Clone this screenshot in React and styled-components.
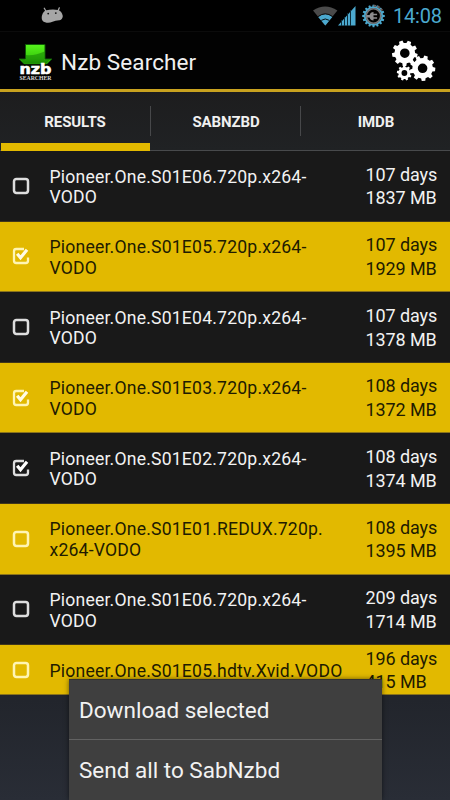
import React from "react";
import styled, { createGlobalStyle } from "styled-components";

const YELLOW = "#e2b900";

const GlobalStyle = createGlobalStyle`
  body { margin: 0; background: #000; }
  * { box-sizing: border-box; }
`;

const Screen = styled.div`
  position: relative;
  width: 450px;
  height: 800px;
  overflow: hidden;
  display: flex;
  flex-direction: column;
  font-family: Roboto, "Noto Sans", sans-serif;
  background: linear-gradient(#181a1e 0px, #22252c 700px, #292d36 800px);
`;

const StatusBar = styled.div`
  height: 32px;
  flex: none;
  display: flex;
  align-items: center;
  background: #000;
  border-bottom: 1px solid #0b0b0b;
  padding: 0 8px 0 41px;
`;

const StatusIcons = styled.div`
  margin-left: auto;
  display: flex;
  align-items: center;
`;

const BatterySlot = styled.div`
  display: flex;
  margin-left: 6px;
`;

const Clock = styled.span`
  width: 49px;
  margin-left: 8px;
  padding-top: 1px;
  color: #4ba9cf;
  font-size: 20px;
  line-height: 30px;
  letter-spacing: -0.2px;
  white-space: nowrap;
`;

const ActionBar = styled.header`
  height: 57px;
  flex: none;
  display: flex;
  align-items: center;
  background: #020202;
  padding: 0 14px 0 18px;
`;

const AppTitle = styled.h1`
  margin: 2px 0 0 7px;
  flex: 1;
  font-size: 22.5px;
  line-height: 28px;
  font-weight: 400;
  color: #f0f0f0;
  letter-spacing: 0.1px;
`;

const Tabs = styled.nav`
  height: 62px;
  flex: none;
  display: flex;
  border-top: 3px solid #c9a21f;
  border-bottom: 1px solid #484a4c;
  background: linear-gradient(#1d1d1e, #202224);
`;

const Tab = styled.div`
  flex: 1;
  height: ${(p) => (p.$active ? "59px" : "58px")};
  display: flex;
  align-items: center;
  justify-content: center;
  font-size: 15px;
  font-weight: 700;
  color: #f0f0f0;
  letter-spacing: -0.1px;
  border-bottom: ${(p) => (p.$active ? `8px solid ${YELLOW}` : "0 solid transparent")};
  padding: ${(p) => (p.$active ? "8px 1px 0 0" : "1px 0 0 1px")};
  margin-left: ${(p) => (p.$active ? "1px" : "0")};
`;

const TabDivider = styled.div`
  width: 1px;
  height: 30px;
  margin-top: 14px;
  background: #47484a;
`;

const List = styled.ul`
  margin: 0;
  padding: 0;
  list-style: none;
  flex: none;
`;

const Row = styled.li`
  height: ${(p) => (p.$short ? "50px" : "70.6px")};
  display: flex;
  align-items: center;
  padding: 0 0 0 12px;
  background: ${(p) => (p.$yellow ? YELLOW : "#191919")};
  color: ${(p) => (p.$yellow ? "#211b00" : "#f2f2f2")};
  border-bottom: 1px solid ${(p) => (p.$yellow ? "#8b741b" : "#40361a")};
`;

const Name = styled.div`
  width: 316px;
  flex: none;
  margin-left: 19.5px;
  padding-top: 2.6px;
  font-size: 17.6px;
  line-height: 20.6px;
  letter-spacing: 0.2px;
  white-space: pre-line;
`;

const Meta = styled.div`
  padding-top: 1.4px;
  font-size: 18px;
  line-height: 23.8px;
  white-space: nowrap;
  letter-spacing: -0.1px;
`;

const Menu = styled.div`
  position: absolute;
  left: 69px;
  top: 679px;
  width: 312.5px;
  height: 121px;
  background: #3f3f3f;
  border-top: 1px solid #303030;
  box-shadow: 0 0 5px rgba(0, 0, 0, 0.55);
`;

const MenuItem = styled.div`
  height: 59px;
  display: flex;
  align-items: center;
  padding: 0 10px;
  font-size: 22.5px;
  color: #f2f2f2;
  letter-spacing: 0;
  & + & { height: 61px; border-top: 1px solid #626262; }
`;

function gearPath(cx, cy, outer, root, teeth, turn = 0) {
  const points = [];
  const step = (Math.PI * 2) / teeth;
  for (let i = 0; i < teeth; i++) {
    const a = i * step + turn;
    [[-0.31, root], [-0.2, outer], [0.2, outer], [0.31, root]].forEach(([t, r]) => {
      points.push(`${(cx + Math.cos(a + t * step) * r).toFixed(2)} ${(cy + Math.sin(a + t * step) * r).toFixed(2)}`);
    });
  }
  return `M${points.join("L")}Z`;
}

const hole = (x, y, r) => `M${x - r} ${y}a${r} ${r} 0 1 0 ${r * 2} 0a${r} ${r} 0 1 0 ${-r * 2} 0Z`;

const AndroidIcon = () => (
  <svg width="23" height="18" viewBox="0 0 23 18">
    <path d="M3.3 1.2 5 4.2M18.3.8 17 4" stroke="#a6a6a6" strokeWidth="1.3" strokeLinecap="round" />
    <path d="M4.5 3.5Q11 1.8 17 3q3.8 1.2 4.8 6-.2 3.5-3.2 4.3-4.1-.1-7.1 1.5-3.9 1.8-7.4.5Q.8 14.3.7 11q.1-5.1 3.8-7.5Z" fill="#a6a6a6" />
    <circle cx="7.2" cy="6.6" r=".9" fill="#111" />
    <circle cx="14.8" cy="6.1" r=".9" fill="#111" />
  </svg>
);

const WifiIcon = () => (
  <svg width="25" height="20" viewBox="0 0 25 20">
    <path d="M0 4.6Q12-3.8 24.4 4.6L12.3 19.5Z" fill="#4a4a4a" />
    <path d="M5.2 10.9Q12.3 5.8 19.3 10.9L12.3 19.5Z" fill="#4ba9cf" />
    <path d="M5 10.6Q12.3 5 19.7 10.6M8.2 14.4Q12.3 11.5 16.4 14.4" stroke="#080c0e" strokeWidth="1" fill="none" />
  </svg>
);

const SignalIcon = () => (
  <svg width="18" height="20" viewBox="0 0 18 20">
    <path d="M0 19.5 17.5 0V19.5Z" fill="#4ba9cf" />
    <path d="M3.5 14v6M6.5 11v9M9.5 7v13M12.5 4v16" stroke="#0c2c3a" strokeWidth="1" />
  </svg>
);

const BatteryIcon = () => (
  <svg width="23" height="24" viewBox="0 0 23 24">
    <path d={gearPath(11.5, 12, 11.3, 9.5, 16) + hole(11.5, 12, 7.8)} fill="#4ba9cf" fillRule="evenodd" />
    <path d="M11.5 1.8A10.2 10.2 0 0 1 20.5 7" stroke="#665e5e" strokeWidth="2" strokeDasharray="2.5 1.4" fill="none" />
    <circle cx="11.5" cy="12" r="7.2" fill="none" stroke="#77777a" strokeWidth="1.6" />
    <path d="M4.5 11H7.6Q8.4 8 11.5 8v1.7h3.6v1.5h-3.6v2h3.6v1.5h-3.6V16.4Q8.4 16.2 7.6 13.4H4.5Z" fill="#8b8b8e" />
  </svg>
);

const LogoSvg = styled.svg`
  width: 36px;
  height: 40px;
  margin-top: 2px;
`;
const LogoText = styled.text`
  font-family: "DejaVu Sans", sans-serif;
  font-weight: 700;
  font-size: 14px;
  fill: #fff;
  stroke: #fff;
  stroke-width: 0.6px;
`;
const LogoCaption = styled.text`
  font-family: "Liberation Serif", serif;
  font-size: 5.9px;
  font-weight: 700;
  fill: #d9d9d9;
`;

const Logo = () => (
  <LogoSvg viewBox="0 0 36 40">
    <defs>
      <linearGradient id="arrow" x1="0" y1="0" x2="0" y2="1">
        <stop offset="0" stopColor="#58f51d" />
        <stop offset=".45" stopColor="#37c90b" />
        <stop offset=".75" stopColor="#158004" />
        <stop offset="1" stopColor="#0a5200" />
      </linearGradient>
    </defs>
    <path d="M7.5 2.5H27V17H34L17.5 34 1 17H7.5Z" fill="url(#arrow)" stroke="#0f5b06" strokeWidth="1" />
    <path d="M8 13Q17 14 26.5 9.5V17.5H32L28 21.5H6L2.5 17.5H8Z" fill="#0b6d03" opacity=".45" />
    <path d="M2 22H33V40H2Z" fill="#020202" opacity=".85" />
    <LogoText x="1.5" y="32.2" textLength="32" lengthAdjust="spacingAndGlyphs">nzb</LogoText>
    <LogoCaption x="1.5" y="38.4" textLength="32" lengthAdjust="spacingAndGlyphs">SEARCHER</LogoCaption>
  </LogoSvg>
);

const GearsIcon = () => (
  <svg width="45" height="42" viewBox="0 0 45 42">
    <g fill="#fff" fillRule="evenodd">
      <path d={gearPath(13.8, 13.2, 12.9, 10.3, 9, 0.2) + hole(13.8, 13.2, 4.8)} />
      <path d={gearPath(31.6, 28.3, 12.8, 10.3, 9, 0.1) + hole(31.6, 28.3, 4.8)} />
      <path d={gearPath(13.4, 33, 7.6, 6, 9, -0.2) + hole(13.4, 33, 2.9)} />
    </g>
  </svg>
);

const Checkbox = ({ checked, yellow }) => {
  const color = yellow ? "#fff5b4" : "#dedede";
  return (
    <svg width="18" height="18" viewBox="0 0 18 18" fill="none" stroke={color}>
      {checked ? (
        <>
          <path d="M12 2H4.2Q2 2 2 4.2V13.8Q2 16 4.2 16H13.8Q16 16 16 13.8V10.5" strokeWidth="2.3" />
          <path d="M5.2 6.8 8.5 10.8 15 2.8" strokeWidth="3.2" stroke={yellow ? "#fffbe6" : "#fff"} />
        </>
      ) : (
        <rect x="2" y="2" width="14" height="14" rx="2.4" strokeWidth="2.5" />
      )}
    </svg>
  );
};

const results = [
  { name: "Pioneer.One.S01E06.720p.x264-\nVODO", days: "107 days", size: "1837 MB" },
  { name: "Pioneer.One.S01E05.720p.x264-\nVODO", days: "107 days", size: "1929 MB", yellow: true, checked: true },
  { name: "Pioneer.One.S01E04.720p.x264-\nVODO", days: "107 days", size: "1378 MB" },
  { name: "Pioneer.One.S01E03.720p.x264-\nVODO", days: "108 days", size: "1372 MB", yellow: true, checked: true },
  { name: "Pioneer.One.S01E02.720p.x264-\nVODO", days: "108 days", size: "1374 MB", checked: true },
  { name: "Pioneer.One.S01E01.REDUX.720p.\nx264-VODO", days: "108 days", size: "1395 MB", yellow: true },
  { name: "Pioneer.One.S01E06.720p.x264-\nVODO", days: "209 days", size: "1714 MB" },
  { name: "Pioneer.One.S01E05.hdtv.Xvid.VODO", days: "196 days", size: "415 MB", yellow: true, short: true },
];

export default function App() {
  return (
    <Screen>
      <GlobalStyle />
      <StatusBar>
        <AndroidIcon />
        <StatusIcons>
          <WifiIcon />
          <SignalIcon />
          <BatterySlot>
            <BatteryIcon />
          </BatterySlot>
          <Clock>14:08</Clock>
        </StatusIcons>
      </StatusBar>
      <ActionBar>
        <Logo />
        <AppTitle>Nzb Searcher</AppTitle>
        <GearsIcon />
      </ActionBar>
      <Tabs>
        <Tab $active>RESULTS</Tab>
        <TabDivider />
        <Tab>SABNZBD</Tab>
        <TabDivider />
        <Tab>IMDB</Tab>
      </Tabs>
      <List>
        {results.map((r, i) => (
          <Row key={i} $yellow={r.yellow} $short={r.short}>
            <Checkbox checked={r.checked} yellow={r.yellow} />
            <Name>{r.name}</Name>
            <Meta>
              <div>{r.days}</div>
              <div>{r.size}</div>
            </Meta>
          </Row>
        ))}
      </List>
      <Menu>
        <MenuItem>Download selected</MenuItem>
        <MenuItem>Send all to SabNzbd</MenuItem>
      </Menu>
    </Screen>
  );
}
